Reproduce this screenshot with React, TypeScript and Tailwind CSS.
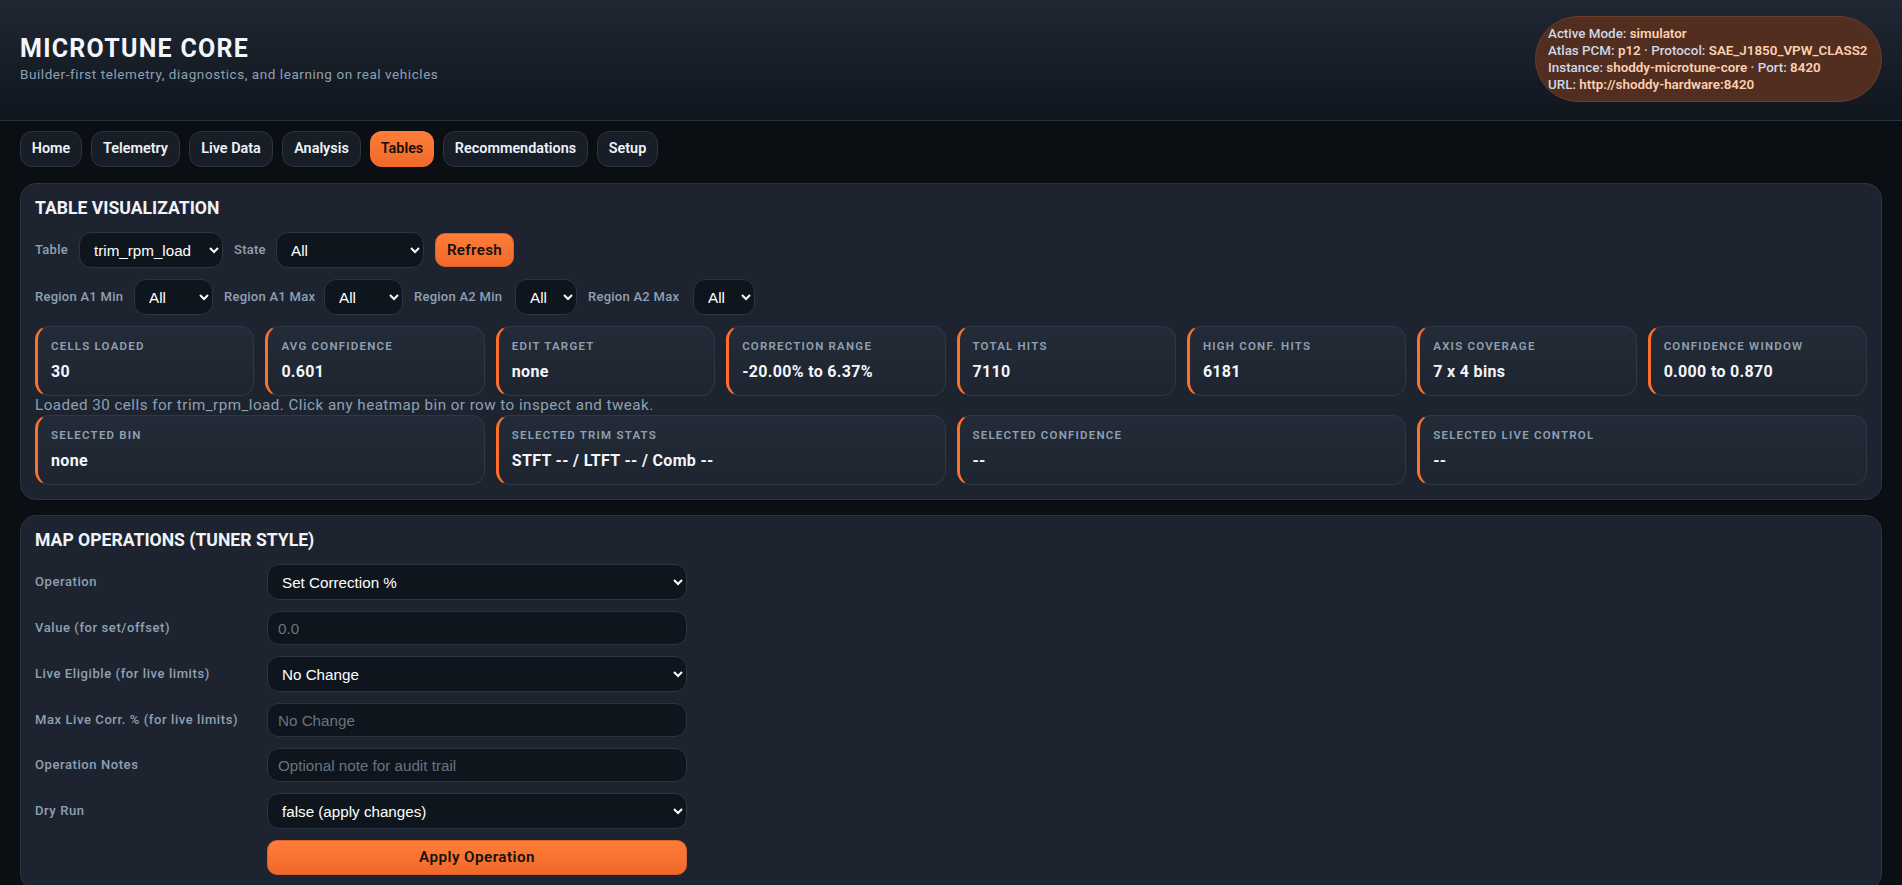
import React from "react"

const tabs = [
  { label: "Home", width: "w-[62px]" },
  { label: "Telemetry", width: "w-[89px]" },
  { label: "Live Data", width: "w-[84px]" },
  { label: "Analysis", width: "w-[79px]" },
  { label: "Tables", width: "w-[64px]" },
  { label: "Recommendations", width: "w-[145px]" },
  { label: "Setup", width: "w-[61px]" },
]

const stats = [
  ["Cells Loaded", "30"],
  ["Avg Confidence", "0.601"],
  ["Edit Target", "none"],
  ["Correction Range", "-20.00% to 6.37%"],
  ["Total Hits", "7110"],
  ["High Conf. Hits", "6181"],
  ["Axis Coverage", "7 x 4 bins"],
  ["Confidence Window", "0.000 to 0.870"],
]

const selected = [
  ["Selected Bin", "none"],
  ["Selected Trim Stats", "STFT -- / LTFT -- / Comb --"],
  ["Selected Confidence", "--"],
  ["Selected Live Control", "--"],
]

const regions = [
  { label: "Region A1 Min", labelWidth: "w-[88px]", width: "w-[79px]" },
  { label: "Region A1 Max", labelWidth: "w-[89px]", width: "w-[79px]" },
  { label: "Region A2 Min", labelWidth: "w-[90px]", width: "w-[62px]" },
  { label: "Region A2 Max", labelWidth: "w-[94px]", width: "w-[62px]" },
]

const fieldClass =
  "h-[36px] rounded-[12px] border border-[#2a3442] bg-[#0f151d] px-[10px] font-['Liberation_Sans',sans-serif] text-[15.2px] text-white [color-scheme:dark] outline-none"
const inputClass =
  "h-[34px] rounded-[12px] border border-[#2a3442] bg-[#0f151d] px-[10px] font-['Liberation_Sans',sans-serif] text-[15.2px] text-white outline-none placeholder:text-[#6b7280]"
const labelClass = "shrink-0 whitespace-nowrap text-[13px] font-medium text-[#8fa0b3]"
const primaryClass =
  "rounded-[10px] border border-[#d9622a] bg-gradient-to-b from-[#ff7d38] to-[#f0682a] text-[15.2px] font-semibold text-[#14100c]"

function StatCard({ label, value }: { label: string; value: string }) {
  return (
    <div className="flex h-[70px] flex-col rounded-[14px] border border-l-[3px] border-[#2d3848] border-l-[#ff6f2c] bg-gradient-to-b from-[#222b37] to-[#1e2530] px-[13px] pt-[11px]">
      <div className="text-[11.5px] font-semibold uppercase leading-[16px] tracking-[0.105em] text-[#8fa0b3]">{label}</div>
      <div className="mt-[7px] text-[16px] font-bold leading-[22px] tracking-[0.02em] text-[#f3f6fa]">{value}</div>
    </div>
  )
}

function Row({ label, children }: { label: string; children: React.ReactNode }) {
  return (
    <>
      <label className={`${labelClass} tracking-[0.045em]`}>{label}</label>
      {children}
    </>
  )
}

export default function App() {
  return (
    <div className="h-[885px] overflow-hidden bg-[#0b0f14] font-['Roboto',sans-serif] text-[#e5e9f0]">
      <header className="flex h-[121px] items-center justify-between border-b border-[#2a3442] bg-gradient-to-b from-[#1f2733] to-[#10161e] pb-[2px] pl-[20px] pr-[20px]">
        <div>
          <h1 className="text-[25px] font-bold leading-[30px] tracking-[0.05em] text-[#f3f6fa]">MICROTUNE CORE</h1>
          <p className="text-[13.5px] tracking-[0.042em] text-[#8fa0b3]">Builder-first telemetry, diagnostics, and learning on real vehicles</p>
        </div>
        <div className="w-[347px] rounded-[44px] border border-[#6b3c27] bg-[#512e20] py-[8px] pl-[12px] text-[13.4px] font-medium leading-[17px] text-[#cfd8e6]">
          <div>Active Mode: <b className="font-semibold text-[#ffd0b0]">simulator</b></div>
          <div>Atlas PCM: <b className="font-semibold text-[#ffd0b0]">p12</b> · Protocol: <b className="font-semibold text-[#ffd0b0]">SAE_J1850_VPW_CLASS2</b></div>
          <div>Instance: <b className="font-semibold text-[#ffd0b0]">shoddy-microtune-core</b> · Port: <b className="font-semibold text-[#ffd0b0]">8420</b></div>
          <div>URL: <b className="font-semibold text-[#ffd0b0]">http://shoddy-hardware:8420</b></div>
        </div>
      </header>

      <nav className="flex gap-[9px] px-[20px] pt-[10px]">
        {tabs.map((tab) =>
          tab.label === "Tables" ? (
            <button key={tab.label} className={`${tab.width} h-[36px] rounded-[12px] bg-gradient-to-b from-[#ff7d38] to-[#f0682a] text-[14.4px] font-semibold text-[#14100c]`}>
              {tab.label}
            </button>
          ) : (
            <button key={tab.label} className={`${tab.width} h-[36px] rounded-[12px] border border-[#2a3442] bg-[#171e28] text-[14.4px] font-semibold text-[#f0f3f8]`}>
              {tab.label}
            </button>
          )
        )}
      </nav>

      <main className="flex flex-col gap-[15px] px-[20px] pt-[16px]">
        <section className="rounded-[16px] border border-[#2a3442] bg-[#1d2430] px-[14px] pb-[14px] pt-[13px]">
          <h2 className="text-[17.6px] font-bold uppercase leading-[22px] text-[#f0f3f8]">Table Visualization</h2>

          <div className="mt-[13px] flex items-center gap-[11px]">
            <label className={`${labelClass} w-[33px] tracking-[0.02em]`}>Table</label>
            <select className={`${fieldClass} w-[144px]`}>
              <option>trim_rpm_load</option>
            </select>
            <label className={`${labelClass} w-[31px] tracking-[0.02em]`}>State</label>
            <select className={`${fieldClass} w-[148px]`}>
              <option>All</option>
            </select>
            <button className={`${primaryClass} h-[34px] w-[79px] tracking-[0.02em]`}>Refresh</button>
          </div>

          <div className="mt-[11px] flex items-center gap-[11px]">
            {regions.map((region) => (
              <React.Fragment key={region.label}>
                <label className={`${labelClass} ${region.labelWidth} tracking-[0.02em]`}>{region.label}</label>
                <select className={`${fieldClass} ${region.width}`}>
                  <option>All</option>
                </select>
              </React.Fragment>
            ))}
          </div>

          <div className="mt-[11px] grid grid-cols-8 gap-[11px]">
            {stats.map(([label, value]) => (
              <StatCard key={label} label={label} value={value} />
            ))}
          </div>

          <p className="h-[19px] text-[15.2px] leading-[19px] tracking-[0.03em] text-[#8fa0b3]">
            Loaded 30 cells for trim_rpm_load. Click any heatmap bin or row to inspect and tweak.
          </p>

          <div className="grid grid-cols-4 gap-[11px]">
            {selected.map(([label, value]) => (
              <StatCard key={label} label={label} value={value} />
            ))}
          </div>
        </section>

        <section className="rounded-[16px] border border-[#2a3442] bg-[#1d2430] px-[14px] pb-[14px] pt-[13px]">
          <h2 className="text-[17.6px] font-bold uppercase leading-[22px] text-[#f0f3f8]">Map Operations (Tuner Style)</h2>

          <div className="mt-[13px] grid w-[652px] grid-cols-[222px_420px] items-center gap-x-[10px] gap-y-[11px]">
            <Row label="Operation">
              <select className={`${fieldClass} w-full`}>
                <option>Set Correction %</option>
              </select>
            </Row>
            <Row label="Value (for set/offset)">
              <input className={`${inputClass} w-full`} placeholder="0.0" />
            </Row>
            <Row label="Live Eligible (for live limits)">
              <select className={`${fieldClass} w-full`}>
                <option>No Change</option>
              </select>
            </Row>
            <Row label="Max Live Corr. % (for live limits)">
              <input className={`${inputClass} w-full`} placeholder="No Change" />
            </Row>
            <Row label="Operation Notes">
              <input className={`${inputClass} w-full`} placeholder="Optional note for audit trail" />
            </Row>
            <Row label="Dry Run">
              <select className={`${fieldClass} w-full`}>
                <option>false (apply changes)</option>
              </select>
            </Row>
            <div />
            <button className={`${primaryClass} h-[35px] tracking-[0.03em]`}>Apply Operation</button>
          </div>
        </section>
      </main>
    </div>
  )
}
